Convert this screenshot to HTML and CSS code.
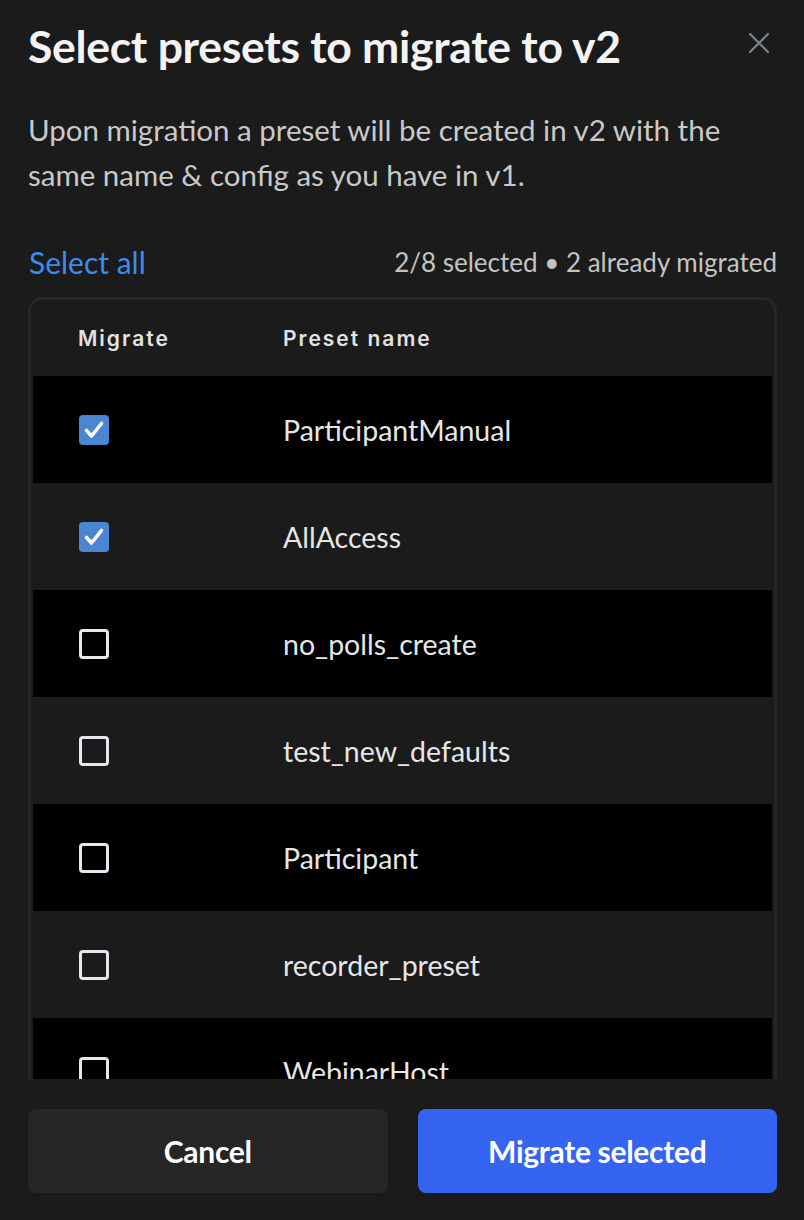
FILE: index.html
```html
<!DOCTYPE html>
<html>
<head>
<meta charset="utf-8">
<link rel="stylesheet" href="styles.css">
</head>
<body>
<div class="modal">
  <div class="head">
    <h1 class="title">Select presets to migrate to v2</h1>
    <button class="close" aria-label="Close">
      <svg width="22" height="22" viewBox="0 0 22 22"><path d="M2 2 L20 20 M20 2 L2 20" stroke="#7b8294" stroke-width="2.2" stroke-linecap="round"/></svg>
    </button>
  </div>
  <p class="desc">Upon migration a preset will be created in v2 with the same name &amp; config as you have in v1.</p>
  <div class="toolbar">
    <a class="select-all">Select all</a>
    <span class="count">2/8 selected • 2 already migrated</span>
  </div>
  <div class="table-wrap">
    <div class="thead">
      <div class="col-a">Migrate</div>
      <div class="col-b">Preset name</div>
    </div>
    <div class="row dark"><div class="col-a"><span class="cb checked"><svg viewBox="0 0 30 30" width="30" height="30"><path d="M7.5 15.5 L12.5 21 L22.5 8.5" fill="none" stroke="#fff" stroke-width="3.6" stroke-linecap="round" stroke-linejoin="round"/></svg></span></div><div class="col-b">ParticipantManual</div></div>
    <div class="row"><div class="col-a"><span class="cb checked"><svg viewBox="0 0 30 30" width="30" height="30"><path d="M7.5 15.5 L12.5 21 L22.5 8.5" fill="none" stroke="#fff" stroke-width="3.6" stroke-linecap="round" stroke-linejoin="round"/></svg></span></div><div class="col-b">AllAccess</div></div>
    <div class="row dark"><div class="col-a"><span class="cb"></span></div><div class="col-b">no_polls_create</div></div>
    <div class="row"><div class="col-a"><span class="cb"></span></div><div class="col-b">test_new_defaults</div></div>
    <div class="row dark"><div class="col-a"><span class="cb"></span></div><div class="col-b">Participant</div></div>
    <div class="row"><div class="col-a"><span class="cb"></span></div><div class="col-b">recorder_preset</div></div>
    <div class="row dark"><div class="col-a"><span class="cb"></span></div><div class="col-b">WebinarHost</div></div>
  </div>
  <div class="actions">
    <button class="btn cancel">Cancel</button>
    <button class="btn primary">Migrate selected</button>
  </div>
</div>
</body>
</html>
```
FILE: styles.css
```css
html, body {
  margin: 0;
  padding: 0;
  background: #1b1b1b;
}
body {
  font-family: Lato, "Liberation Sans", sans-serif;
  color: #f2f2f2;
}
.modal {
  width: 804px;
  height: 1220px;
  box-sizing: border-box;
  padding: 0 27px 0 28px;
  display: flex;
  flex-direction: column;
}
.head {
  height: 90px;
  display: flex;
  align-items: center;
  justify-content: space-between;
}
.title {
  margin: 0;
  font-size: 44.5px;
  font-weight: 700;
  letter-spacing: -0.3px;
  color: #f3f3f3;
}
.close {
  background: none;
  border: 0;
  padding: 0;
  margin-right: 7px;
  margin-top: -4px;
  width: 22px;
  height: 22px;
  display: flex;
}
.desc {
  margin: 17px 0 0;
  font-size: 29.5px;
  line-height: 45px;
  color: #c9c9c9;
  padding-right: 30px;
}
.toolbar {
  margin-top: 45px;
  height: 40px;
  display: flex;
  align-items: center;
  justify-content: space-between;
}
.select-all {
  font-size: 30px;
  color: #3c8cf0;
  padding-left: 1px;
}
.count {
  font-size: 26px;
  color: #c4c4c4;
}
.table-wrap {
  margin-top: 15px;
  height: 782px;
  box-sizing: border-box;
  border: 3px solid #262626;
  border-bottom: 0;
  border-radius: 14px 14px 0 0;
  padding: 0 2px;
  overflow: hidden;
  flex: none;
}
.thead {
  height: 76px;
  display: flex;
  align-items: center;
  font-family: Inter, "Noto Sans", sans-serif;
  font-size: 21px;
  font-weight: 600;
  letter-spacing: 2px;
  color: #e2e2e2;
}
.col-a {
  width: 250px;
  padding-left: 45px;
  box-sizing: border-box;
  display: flex;
  align-items: center;
}
.row .col-a {
  padding-left: 46px;
}
.col-b {
  flex: 1;
}
.row {
  height: 107px;
  display: flex;
  align-items: center;
  font-size: 28.5px;
  color: #e6e6e6;
  background: #1b1b1b;
}
.row.dark {
  background: #000;
}
.cb {
  width: 30px;
  height: 30px;
  box-sizing: border-box;
  border: 3px solid #e3e7ee;
  border-radius: 4px;
  display: block;
}
.cb.checked {
  border: 0;
  background: #4a86d1;
}
.cb svg {
  display: block;
}
.actions {
  margin-top: 30px;
  display: flex;
  gap: 30px;
}
.btn {
  flex: 1;
  height: 84px;
  border: 0;
  border-radius: 8px;
  font-family: Lato, "Liberation Sans", sans-serif;
  font-size: 30px;
  font-weight: 700;
  color: #fff;
  letter-spacing: -0.3px;
}
.cancel {
  background: #262626;
}
.primary {
  background: #3563f2;
}
```
